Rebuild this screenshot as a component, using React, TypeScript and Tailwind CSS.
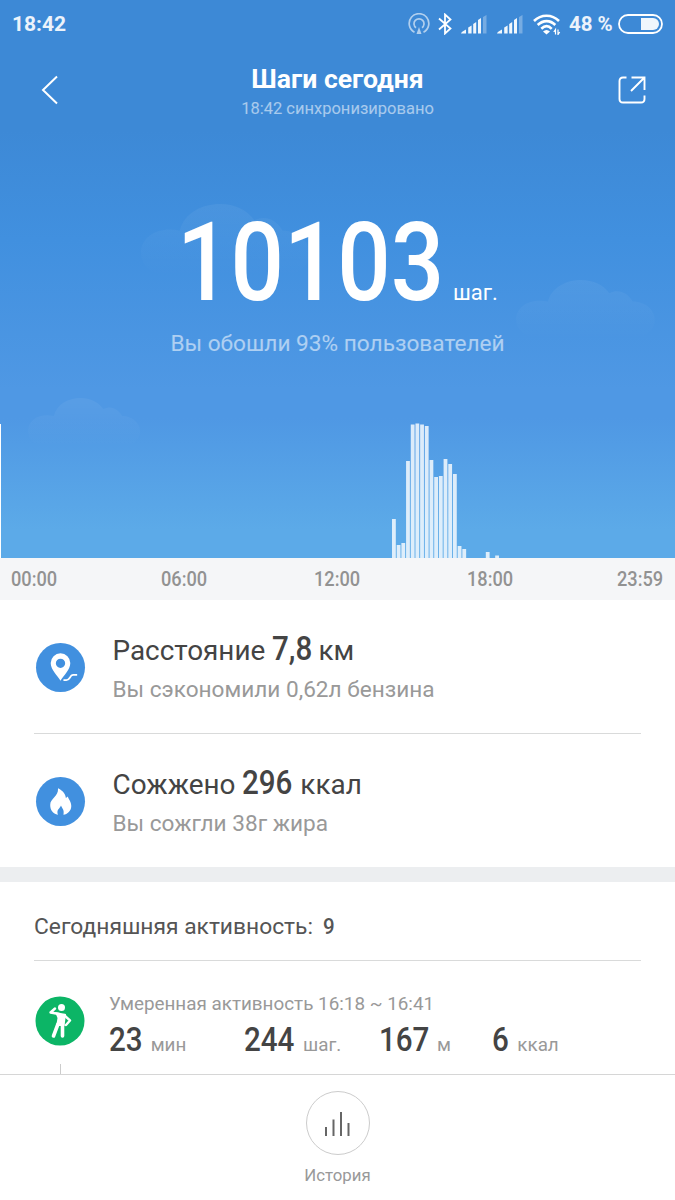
import React from "react";

const bars: [number, number][] = [
  [0, 39], [1, 13], [2, 15], [3, 97], [4, 133.5], [5, 134.5], [6, 133.5], [7, 132],
  [8, 98], [9, 81], [10, 82], [11, 99], [12, 94], [13, 84], [14, 12], [15, 9], [20, 6], [22, 2.5],
];

function Cloud({ className }: { className: string }) {
  return (
    <svg className={`absolute ${className}`} viewBox="0 0 114 50" preserveAspectRatio="none">
      <defs>
        <linearGradient id="cloud" x1="0" y1="0" x2="0" y2="1">
          <stop offset="0" stopColor="#fff" stopOpacity="0.055" />
          <stop offset="1" stopColor="#fff" stopOpacity="0" />
        </linearGradient>
      </defs>
      <path d="M17 49C7 48 0 41 0 33C0 21 13 15 26 18C29 6 41 0 53 0C63 0 71 4 76 11C84 7 91 11 95 18C106 18 114 26 113 35C112 43 104 48 96 49Z" fill="url(#cloud)" />
    </svg>
  );
}

function Signal() {
  return (
    <svg width="27" height="20" viewBox="0 0 27 20" fill="#fff">
      <path d="M0 19.500Q0 18 5 15.500V19.500ZM7.200 13.500L10.600 11.500V19.500H7.200ZM12.200 10L15.200 8V19.500H12.200ZM17 6L20 4V19.500H17Z" opacity=".93" />
      <path d="M22 3L25.500 1V19.500H22Z" opacity=".3" />
    </svg>
  );
}

function StatusBar() {
  return (
    <div className="relative flex h-[48px] items-center justify-between pr-[12px] pl-[12px] text-[21px] font-bold text-white/90">
      <span className="leading-none">18:42</span>
      <div className="flex items-center">
        <svg width="22" height="22" viewBox="0 0 22 22" fill="none" stroke="#fff" strokeWidth="1.700" opacity=".6">
          <path d="M6.500 19.200A9.800 9.800 0 1 1 15.500 19.200M8 14.800A5 5 0 1 1 14 14.800" />
          <path d="M11 14L13.500 21H8.500Z" fill="#fff" stroke="none" />
        </svg>
        <svg className="ml-[8px]" width="14" height="22" viewBox="0 0 14 22" fill="none" stroke="#fff" strokeWidth="1.800">
          <path d="M1 5.500L12.500 15.500L7 20.500V1.500L12.500 6.500L1 16.500" />
        </svg>
        <div className="ml-[9px] flex gap-[9px]"><Signal /><Signal /></div>
        <svg className="ml-[9px]" width="28" height="21" viewBox="0 0 28 21" fill="none" stroke="#fff" strokeWidth="2.600">
          <path d="M1 7C8 0 19 0 26 7M4.700 11C10 5.800 17.300 5.800 22.300 11M8.300 14.800C12 11.200 15.300 11.200 18.700 14.800" />
          <path d="M10 17.500Q13.500 14.500 17 17.500L13.500 20.500Z" fill="#fff" stroke="none" />
          <path d="M22.500 20.500V15.500L20.800 18M25 15.500V20.500L26.700 18" strokeWidth="1.200" />
        </svg>
        <span className="ml-[8px] w-[44px] text-[20.500px] leading-none whitespace-nowrap">48 %</span>
        <svg className="ml-[5px]" width="45" height="20" viewBox="0 0 45 20">
          <rect x="1" y="1" width="43" height="18" rx="9" fill="none" stroke="#fff" strokeWidth="1.800" />
          <path d="M23 4H35A6 6 0 0 1 35 16H23Z" fill="#fff" opacity=".92" />
        </svg>
      </div>
    </div>
  );
}

function Num({ children, className }: { children: string; className: string }) {
  return <span className={`inline-block origin-left font-medium ${className}`}>{children}</span>;
}

function Hero() {
  return (
    <section className="relative flex h-[558px] flex-col bg-[linear-gradient(#3d89d6_0px,#3d89d6_130px,#4190df_240px,#4f98e4_390px,#4f98e4_418px,#5caae8_530px,#5caae8_558px)]">
      <Cloud className="top-[204px] left-[141px] h-[74px] w-[170px]" />
      <Cloud className="top-[280px] left-[516px] h-[60px] w-[140px]" />
      <Cloud className="top-[398px] left-[28px] h-[50px] w-[113px]" />
      <StatusBar />
      <header className="relative flex h-[82px] items-start justify-between pr-[29px] pl-[41px] text-white">
        <svg className="mt-[27px]" width="18" height="30" viewBox="0 0 18 30" fill="none" stroke="#fff" strokeWidth="2">
          <path d="M16 1.500L2 15L16 28.500" />
        </svg>
        <div className="mr-[2px] flex flex-col items-center pt-[15px]">
          <h1 className="text-[26.600px] leading-[32px] font-bold">Шаги сегодня</h1>
          <p className="mt-[4px] text-[16.500px] leading-[20px] text-white/55">18:42 синхронизировано</p>
        </div>
        <svg className="mt-[28px]" width="28" height="28" viewBox="0 0 28 28" fill="none" stroke="#fff" strokeWidth="1.900">
          <path d="M8.500 1.500H5Q1.500 1.500 1.500 5V23Q1.500 26.500 5 26.500H23Q26.500 26.500 26.500 23V19.500M13.500 1.500H26.500V14M26 2L13 15" />
        </svg>
      </header>
      <div className="relative mt-[78px] ml-[177px] flex h-[110px] items-baseline text-white">
        <div className="w-[276px] text-[110px] leading-[110px]"><Num className="scale-x-[0.855]">10103</Num></div>
        <span className="text-[22px]">шаг.</span>
      </div>
      <p className="relative mt-[12px] text-center text-[22.650px] leading-[28px] text-white/55">Вы обошли 93% пользователей</p>
      <svg className="relative mt-auto block" width="675" height="136" viewBox="0 0 675 136">
        <rect x="0" y="2" width="1" height="134" fill="#fff" />
        {bars.map(([i, h]) => (
          <rect key={i} x={392 + i * 4.69} y={136 - h} width="3.800" height={h} fill="#fff" fillOpacity=".8" />
        ))}
      </svg>
    </section>
  );
}

function Row({ icon, label, value, unit, note }: { icon: React.ReactNode; label: string; value: string; unit: string; note: string }) {
  return (
    <div className="flex h-[133px] items-center pl-[1.500px]">
      <div className="mt-px flex size-[49px] items-center justify-center rounded-full bg-[#4190df]">{icon}</div>
      <div className="ml-[28px]">
        <p className="text-[27.900px] leading-[36px] whitespace-nowrap text-[#444]">
          {label} <Num className="-mr-[7px] scale-x-[0.87] text-[34px] leading-[36px]">{value}</Num> {unit}
        </p>
        <p className="mt-[7px] text-[22.600px] leading-[28px] text-[#999]">{note}</p>
      </div>
    </div>
  );
}

const stats: [string, string, string, string][] = [
  ["23", "мин", "w-[135px]", "ml-[3px]"],
  ["244", "шаг.", "w-[135px]", "ml-[1px]"],
  ["167", "м", "w-[113px]", "ml-[0px]"],
  ["6", "ккал", "", "ml-[6px]"],
];

const hours: [string, string][] = [
  ["00:00", "w-[150px]"],
  ["06:00", "w-[153px]"],
  ["12:00", "w-[153px]"],
  ["18:00", "w-[150px]"],
  ["23:59", "w-[47px]"],
];

export default function App() {
  return (
    <main className="flex h-[1200px] w-[675px] flex-col overflow-hidden bg-white font-[Roboto,sans-serif]">
      <Hero />
      <div className="flex h-[42px] items-center bg-[#f5f6f8] pl-[11px] text-[20px] text-[#929292]">
        {hours.map(([t, w]) => (
          <div key={t} className={w}><Num className="scale-x-[0.91]">{t}</Num></div>
        ))}
      </div>
      <div className="px-[34px]">
        <Row label="Расстояние" value="7,8" unit="км" note="Вы сэкономили 0,62л бензина" icon={
          <svg width="50" height="50" viewBox="0 0 50 50">
            <path fillRule="evenodd" d="M25 39C22 34 15 28 15 21A10 10 0 0 1 35 21C35 28 28 34 25 39ZM25 16.500A4.700 4.700 0 1 0 25 26A4.700 4.700 0 1 0 25 16.500Z" fill="#fff" />
            <path d="M28 38.500H31Q33 38.500 34.500 36Q36 33 38 33H42" fill="none" stroke="#fff" strokeWidth="1.800" />
          </svg>
        } />
        <div className="h-px bg-[#d9dada]" />
        <Row label="Сожжено" value="296" unit="ккал" note="Вы сожгли 38г жира" icon={
          <svg width="50" height="50" viewBox="0 0 50 50">
            <path d="M22.500 12C28 15 30 18 30.500 22L32.500 20.500C33 23 36 26 36 30C36 35 32 38.500 28 39C29 34 27 33 25.500 29.500C24 33 20.500 34 22.500 39C17 38 14.500 34 14.500 29C14.500 22 23 21 22.500 12Z" fill="#fff" />
          </svg>
        } />
      </div>
      <div className="h-[15px] shrink-0 bg-[#eceef0]" />
      <div className="h-[192px] shrink-0 px-[34px]">
        <h2 className="flex h-[78px] items-center pt-[13px] text-[22.800px] whitespace-pre text-[#555]">Сегодняшняя активность:  <b className="-ml-px origin-left scale-x-[0.9] font-medium">9</b></h2>
        <div className="h-px bg-[#d9dada]" />
        <div className="flex pl-[1px]">
          <div className="flex flex-col items-center pt-[35px]">
            <svg width="50" height="50" viewBox="0 0 50 50">
              <circle cx="25" cy="25" r="24.500" fill="#0cb566" />
              <circle cx="26.500" cy="11.500" r="3.500" fill="#fff" />
              <g fill="none" stroke="#fff" strokeLinecap="round" strokeLinejoin="round">
                <path d="M24 18L15.500 16.500L20 12.500M29 19L35 24.500L31 29" strokeWidth="2.400" />
                <path d="M23 28L18.500 40M27.500 28V40" strokeWidth="3.600" />
              </g>
              <path d="M20 16L31 18L29.500 30H21.200L22.500 22Z" fill="#fff" />
            </svg>
            <div className="mt-[18px] h-[12px] w-px bg-[#ccc]" />
          </div>
          <div className="pt-[31px] pl-[24px]">
            <p className="text-[18.850px] leading-[24px] text-[#999]">Умеренная активность 16:18 ~ 16:41</p>
            <div className="mt-[2px] flex h-[42px] items-baseline">
              {stats.map(([v, u, w, gap]) => (
                <div key={u} className={`flex items-baseline text-[18.800px] text-[#999] ${w}`}>
                  <Num className="scale-x-[0.87] text-[34px] leading-[42px] text-[#444]">{v}</Num>
                  <span className={gap}>{u}</span>
                </div>
              ))}
            </div>
          </div>
        </div>
      </div>
      <footer className="flex grow flex-col items-center border-t-[1px] border-[#d6d6d6] bg-white pt-[16px]">
        <div className="flex size-[64px] items-center justify-center rounded-full border border-[#ccc]">
          <svg width="28" height="28" viewBox="0 0 28 28" stroke="#666" strokeWidth="2">
            <path d="M2 18V27M9.500 10.500V27M17 3V27M24.500 14V27" />
          </svg>
        </div>
        <span className="mt-[9px] text-[16.800px] leading-[22px] text-[#999]">История</span>
      </footer>
    </main>
  );
}
